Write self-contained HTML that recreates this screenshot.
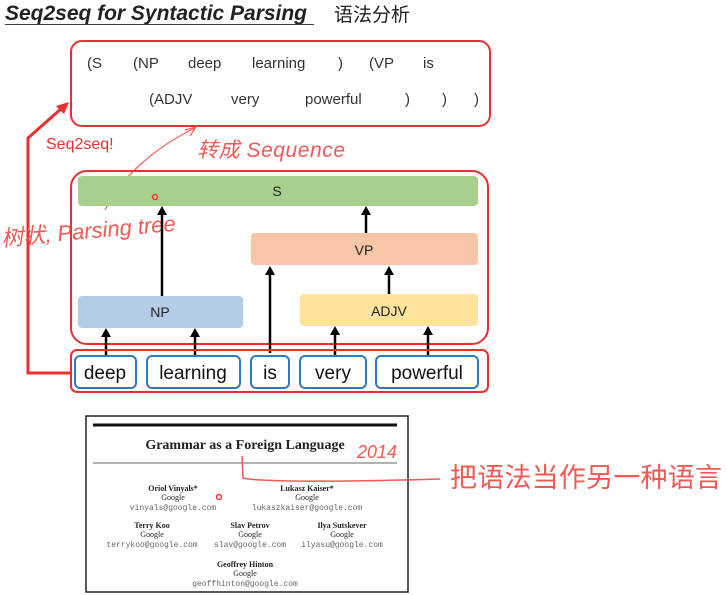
<!DOCTYPE html>
<html><head><meta charset="utf-8"><style>
html,body{margin:0;padding:0;background:#fff;width:727px;height:595px;overflow:hidden}
svg{display:block}
.s{font-family:"Liberation Sans","Noto Sans CJK SC",sans-serif}
.r{font-family:"Liberation Serif",serif}
.m{font-family:"Liberation Mono",monospace}
</style></head><body>
<svg width="727" height="595" viewBox="0 0 727 595" xmlns="http://www.w3.org/2000/svg">
<text class="s" x="5" y="20" font-size="21" font-weight="bold" font-style="italic" fill="#222" textLength="302">Seq2seq for Syntactic Parsing</text>
<line x1="5" y1="24.5" x2="314" y2="24.5" stroke="#444" stroke-width="1"/>
<text class="s" x="334" y="21" font-size="19" fill="#222">语法分析</text>

<rect x="71" y="41" width="419" height="85" rx="11" fill="#fff" stroke="#e8302f" stroke-width="2"/>
<g font-size="15" fill="#333">
<text class="s" x="87" y="68">(S</text><text class="s" x="133" y="68">(NP</text><text class="s" x="188" y="68">deep</text><text class="s" x="252" y="68">learning</text><text class="s" x="338" y="68">)</text><text class="s" x="369" y="68">(VP</text><text class="s" x="423" y="68">is</text>
<text class="s" x="149" y="104">(ADJV</text><text class="s" x="231" y="104">very</text><text class="s" x="305" y="104">powerful</text><text class="s" x="405" y="104">)</text><text class="s" x="442" y="104">)</text><text class="s" x="474" y="104">)</text>
</g>

<polyline points="71,373 28,373 28,138 62,108" fill="none" stroke="#e8302f" stroke-width="3"/>
<path d="M69,102 L56,106 L64,114 Z" fill="#e8302f"/>
<text class="s" x="46" y="149" font-size="16" fill="#e8302f">Seq2seq!</text>

<path d="M105,210 C120,180 150,150 195,128" fill="none" stroke="#f0605a" stroke-width="1.2"/>
<path d="M185,130 L196,127 L190,136" fill="none" stroke="#f0605a" stroke-width="1.2"/>
<text class="s" x="197" y="157" font-size="21" fill="#f05a55" font-style="italic" textLength="148">转成 Sequence</text>
<text class="s" x="2" y="246" font-size="22" fill="#f05a55" font-style="italic" transform="rotate(-5 2 246)">树状, Parsing tree</text>

<rect x="71" y="171" width="417" height="173" rx="16" fill="none" stroke="#e8302f" stroke-width="2"/>
<rect x="78" y="176" width="400" height="30" rx="4" fill="#a9cf8e"/>
<text class="s" x="277" y="196" font-size="14" fill="#222" text-anchor="middle">S</text>
<rect x="251" y="233" width="227" height="32" rx="4" fill="#f7c6a6"/>
<text class="s" x="364" y="255" font-size="14" fill="#222" text-anchor="middle">VP</text>
<rect x="78" y="296" width="165" height="32" rx="4" fill="#b4cce8"/>
<text class="s" x="160" y="317" font-size="14" fill="#222" text-anchor="middle">NP</text>
<rect x="300" y="294" width="178" height="32" rx="4" fill="#fde39c"/>
<text class="s" x="389" y="316" font-size="14" fill="#222" text-anchor="middle">ADJV</text>

<g stroke="#000" stroke-width="2.5">
<line x1="162" y1="296" x2="162" y2="214"/>
<line x1="366" y1="233" x2="366" y2="214"/>
<line x1="389" y1="294" x2="389" y2="274"/>
<line x1="270" y1="353" x2="270" y2="274"/>
<line x1="106" y1="355" x2="106" y2="336"/>
<line x1="195" y1="355" x2="195" y2="336"/>
<line x1="335" y1="355" x2="335" y2="334"/>
<line x1="428" y1="355" x2="428" y2="334"/>
</g>
<g fill="#000">
<path d="M157,215 L162,206 L167,215Z"/><path d="M361,215 L366,206 L371,215Z"/>
<path d="M384,275 L389,266 L394,275Z"/><path d="M265,275 L270,266 L275,275Z"/>
<path d="M101,337 L106,328 L111,337Z"/><path d="M190,337 L195,328 L200,337Z"/>
<path d="M330,335 L335,326 L340,335Z"/><path d="M423,335 L428,326 L433,335Z"/>
</g>

<rect x="71" y="350" width="417" height="42" rx="6" fill="none" stroke="#e8302f" stroke-width="2"/>
<g fill="#fff" stroke="#2e7bc0" stroke-width="2">
<rect x="75" y="356" width="61" height="32" rx="5"/>
<rect x="147" y="356" width="93" height="32" rx="5"/>
<rect x="251" y="356" width="38" height="32" rx="5"/>
<rect x="300" y="356" width="66" height="32" rx="5"/>
<rect x="376" y="356" width="102" height="32" rx="5"/>
</g>
<g font-size="19" fill="#111" text-anchor="middle">
<text class="s" x="105" y="379">deep</text><text class="s" x="193" y="379">learning</text><text class="s" x="270" y="379">is</text><text class="s" x="333" y="379">very</text><text class="s" x="427" y="379">powerful</text>
</g>

<rect x="86" y="416" width="322" height="176" fill="#fff" stroke="#222" stroke-width="1.5"/>
<line x1="93" y1="425" x2="397" y2="425" stroke="#111" stroke-width="3"/>
<line x1="93" y1="463" x2="397" y2="463" stroke="#666" stroke-width="1"/>
<g text-anchor="middle" fill="#222">
<text class="r" x="245" y="449" font-size="14" font-weight="bold">Grammar as a Foreign Language</text>
<text class="r" x="173" y="491" font-size="8" font-weight="bold">Oriol Vinyals*</text>
<text class="r" x="173" y="500" font-size="8">Google</text>
<text class="m" x="173" y="510" font-size="8" fill="#666">vinyals@google.com</text>
<text class="r" x="307" y="491" font-size="8" font-weight="bold">Lukasz Kaiser*</text>
<text class="r" x="307" y="500" font-size="8">Google</text>
<text class="m" x="307" y="510" font-size="8" fill="#666">lukaszkaiser@google.com</text>
<text class="r" x="152" y="528" font-size="8" font-weight="bold">Terry Koo</text>
<text class="r" x="152" y="537" font-size="8">Google</text>
<text class="m" x="152" y="547" font-size="8" fill="#666">terrykoo@google.com</text>
<text class="r" x="250" y="528" font-size="8" font-weight="bold">Slav Petrov</text>
<text class="r" x="250" y="537" font-size="8">Google</text>
<text class="m" x="250" y="547" font-size="8" fill="#666">slav@google.com</text>
<text class="r" x="342" y="528" font-size="8" font-weight="bold">Ilya Sutskever</text>
<text class="r" x="342" y="537" font-size="8">Google</text>
<text class="m" x="342" y="547" font-size="8" fill="#666">ilyasu@google.com</text>
<text class="r" x="245" y="567" font-size="8" font-weight="bold">Geoffrey Hinton</text>
<text class="r" x="245" y="576" font-size="8">Google</text>
<text class="m" x="245" y="586" font-size="8" fill="#666">geoffhinton@google.com</text>
</g>
<text class="s" x="357" y="458" font-size="18" fill="#f05a55" font-style="italic">2014</text>
<path d="M242,456 L243,478 C260,482 340,482 440,479" fill="none" stroke="#f05a55" stroke-width="1.5"/>
<text class="s" x="450" y="487" font-size="27" fill="#f05a55" textLength="272">把语法当作另一种语言</text>
<circle cx="155" cy="197" r="2.5" fill="none" stroke="#f33" stroke-width="1.5"/>
<circle cx="219" cy="497" r="2.5" fill="none" stroke="#f33" stroke-width="1.5"/>
</svg>
</body></html>
